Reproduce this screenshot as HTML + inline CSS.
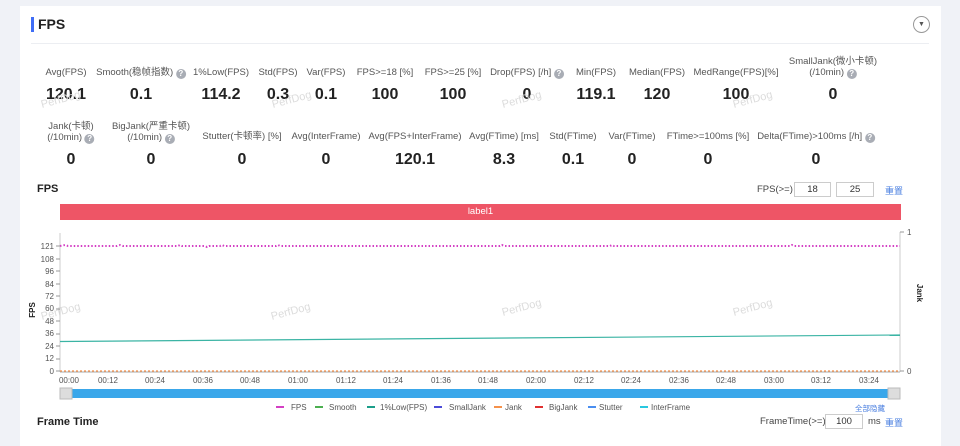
<!DOCTYPE html>
<html><head><meta charset="utf-8"><style>
*{margin:0;padding:0;box-sizing:border-box}
body{width:960px;height:433px;overflow:hidden;background:#f0f2f7;font-family:"Liberation Sans","Noto Sans CJK SC",sans-serif;color:#333;position:relative}
.card{position:absolute;left:20px;top:6px;width:921px;height:440px;background:#fff}
.a{position:absolute;white-space:nowrap}
.l{font-size:9.5px;color:#555;transform:translateX(-50%);text-align:center;line-height:11px}
.v{font-size:16px;font-weight:bold;color:#222;transform:translateX(-50%)}
.q{display:inline-block;width:10px;height:10px;border-radius:50%;background:#a9adb5;color:#fff;font-size:8px;line-height:10px;text-align:center;font-weight:bold;vertical-align:-1px}
.box{position:absolute;border:1px solid #ccc;font-size:9.5px;text-align:center;line-height:13px;color:#333}
.blue{color:#4a7fe0;font-size:9px}
</style></head><body>
<div class="card"></div>
<div class="a" style="left:31px;top:17px;width:3px;height:15px;background:#3f6df6"></div>
<div class="a" style="left:38px;top:16px;font-size:14px;font-weight:bold;color:#222">FPS</div>
<div class="a" style="left:31px;top:43px;width:898px;height:1px;background:#eceef2"></div>
<div class="a" style="left:913px;top:16px;width:17px;height:17px;border:1px solid #999;border-radius:50%;font-size:7px;text-align:center;line-height:15px;color:#555">▼</div>

<div class="a l" style="left:66px;top:67px">Avg(FPS)</div>
<div class="a l" style="left:141px;top:67px">Smooth(稳帧指数) <span class="q">?</span></div>
<div class="a l" style="left:221px;top:67px">1%Low(FPS)</div>
<div class="a l" style="left:278px;top:67px">Std(FPS)</div>
<div class="a l" style="left:326px;top:67px">Var(FPS)</div>
<div class="a l" style="left:385px;top:67px">FPS>=18 [%]</div>
<div class="a l" style="left:453px;top:67px">FPS>=25 [%]</div>
<div class="a l" style="left:527px;top:67px">Drop(FPS) [/h] <span class="q">?</span></div>
<div class="a l" style="left:596px;top:67px">Min(FPS)</div>
<div class="a l" style="left:657px;top:67px">Median(FPS)</div>
<div class="a l" style="left:736px;top:67px">MedRange(FPS)[%]</div>
<div class="a l" style="left:833px;top:56px">SmallJank(微小卡顿)<br>(/10min) <span class="q">?</span></div>

<div class="a v" style="left:66px;top:86px">120.1</div>
<div class="a v" style="left:141px;top:86px">0.1</div>
<div class="a v" style="left:221px;top:86px">114.2</div>
<div class="a v" style="left:278px;top:86px">0.3</div>
<div class="a v" style="left:326px;top:86px">0.1</div>
<div class="a v" style="left:385px;top:86px">100</div>
<div class="a v" style="left:453px;top:86px">100</div>
<div class="a v" style="left:527px;top:86px">0</div>
<div class="a v" style="left:596px;top:86px">119.1</div>
<div class="a v" style="left:657px;top:86px">120</div>
<div class="a v" style="left:736px;top:86px">100</div>
<div class="a v" style="left:833px;top:86px">0</div>

<div class="a l" style="left:71px;top:121px">Jank(卡顿)<br>(/10min) <span class="q">?</span></div>
<div class="a l" style="left:151px;top:121px">BigJank(严重卡顿)<br>(/10min) <span class="q">?</span></div>
<div class="a l" style="left:242px;top:131px">Stutter(卡顿率) [%]</div>
<div class="a l" style="left:326px;top:131px">Avg(InterFrame)</div>
<div class="a l" style="left:415px;top:131px">Avg(FPS+InterFrame)</div>
<div class="a l" style="left:504px;top:131px">Avg(FTime) [ms]</div>
<div class="a l" style="left:573px;top:131px">Std(FTime)</div>
<div class="a l" style="left:632px;top:131px">Var(FTime)</div>
<div class="a l" style="left:708px;top:131px">FTime>=100ms [%]</div>
<div class="a l" style="left:816px;top:131px">Delta(FTime)>100ms [/h] <span class="q">?</span></div>

<div class="a v" style="left:71px;top:151px">0</div>
<div class="a v" style="left:151px;top:151px">0</div>
<div class="a v" style="left:242px;top:151px">0</div>
<div class="a v" style="left:326px;top:151px">0</div>
<div class="a v" style="left:415px;top:151px">120.1</div>
<div class="a v" style="left:504px;top:151px">8.3</div>
<div class="a v" style="left:573px;top:151px">0.1</div>
<div class="a v" style="left:632px;top:151px">0</div>
<div class="a v" style="left:708px;top:151px">0</div>
<div class="a v" style="left:816px;top:151px">0</div>

<div class="a" style="left:37px;top:183px;font-size:11px;font-weight:bold;color:#222">FPS</div>
<div class="a" style="left:757px;top:184px;font-size:9.5px;color:#444">FPS(>=)</div>
<div class="box" style="left:794px;top:182px;width:37px;height:15px">18</div>
<div class="box" style="left:836px;top:182px;width:38px;height:15px">25</div>
<div class="a blue" style="left:885px;top:184px">重置</div>

<div class="a" style="left:60px;top:204px;width:841px;height:16px;background:#ee5566;color:#fff;font-size:9.5px;text-align:center;line-height:16px">label1</div>

<svg class="a" style="left:0;top:0" width="960" height="433" font-family="Liberation Sans, sans-serif">
<g fill="#dcdcdc" font-size="11">
<text x="42" y="320" transform="rotate(-15 42 320)">PerfDog</text>
<text x="272" y="320" transform="rotate(-15 272 320)">PerfDog</text>
<text x="503" y="316" transform="rotate(-15 503 316)">PerfDog</text>
<text x="734" y="316" transform="rotate(-15 734 316)">PerfDog</text>
<text x="42" y="108" transform="rotate(-15 42 108)">PerfDog</text>
<text x="273" y="108" transform="rotate(-15 273 108)">PerfDog</text>
<text x="503" y="108" transform="rotate(-15 503 108)">PerfDog</text>
<text x="734" y="108" transform="rotate(-15 734 108)">PerfDog</text>
</g>
<line x1="60" y1="233" x2="60" y2="372" stroke="#ccc"/>
<line x1="900" y1="232" x2="900" y2="372" stroke="#ccc"/>
<line x1="60" y1="372" x2="900" y2="372" stroke="#aaa"/>
<g font-size="8" fill="#555" text-anchor="end">
<text x="54" y="249">121</text><text x="54" y="262">108</text><text x="54" y="274">96</text><text x="54" y="287">84</text><text x="54" y="299">72</text><text x="54" y="311">60</text><text x="54" y="324">48</text><text x="54" y="336">36</text><text x="54" y="349">24</text><text x="54" y="361">12</text><text x="54" y="374">0</text>
</g>
<g stroke="#999"><line x1="56" y1="246" x2="60" y2="246"/><line x1="56" y1="259" x2="60" y2="259"/><line x1="56" y1="271" x2="60" y2="271"/><line x1="56" y1="284" x2="60" y2="284"/><line x1="56" y1="296" x2="60" y2="296"/><line x1="56" y1="309" x2="60" y2="309"/><line x1="56" y1="321" x2="60" y2="321"/><line x1="56" y1="334" x2="60" y2="334"/><line x1="56" y1="346" x2="60" y2="346"/><line x1="56" y1="359" x2="60" y2="359"/><line x1="56" y1="371" x2="60" y2="371"/>
<line x1="900" y1="232" x2="904" y2="232"/><line x1="900" y1="371" x2="904" y2="371"/></g>
<text x="907" y="235" font-size="8" fill="#555">1</text>
<text x="907" y="374" font-size="8" fill="#555">0</text>
<text transform="translate(35 310) rotate(-90)" font-size="8" fill="#222" font-weight="bold" text-anchor="middle">FPS</text>
<text transform="translate(917 293) rotate(90)" font-size="8" fill="#222" font-weight="bold" text-anchor="middle">Jank</text>
<line x1="60" y1="341.5" x2="900" y2="335" stroke="#3bb4a4" stroke-width="1.2"/>
<line x1="60" y1="371" x2="900" y2="371" stroke="#f5914a" stroke-width="1.2" stroke-dasharray="2 2"/>
<polyline points="60,246 65,245 68,246 117,246 120,245 123,246 178,246 180,245 182,246 205,246 207,247 209,246 220,246 222,245 224,246 276,246 278,245 280,246 500,246 502,245 504,246 610,246 612,245 614,246 790,246 792,245 794,246 900,246" fill="none" stroke="#d43fc4" stroke-width="2" stroke-dasharray="1.5 2"/>
<g font-size="8" fill="#555" text-anchor="middle">
<text x="69" y="383">00:00</text><text x="108" y="383">00:12</text><text x="155" y="383">00:24</text><text x="203" y="383">00:36</text><text x="250" y="383">00:48</text><text x="298" y="383">01:00</text><text x="346" y="383">01:12</text><text x="393" y="383">01:24</text><text x="441" y="383">01:36</text><text x="488" y="383">01:48</text><text x="536" y="383">02:00</text><text x="584" y="383">02:12</text><text x="631" y="383">02:24</text><text x="679" y="383">02:36</text><text x="726" y="383">02:48</text><text x="774" y="383">03:00</text><text x="821" y="383">03:12</text><text x="869" y="383">03:24</text>
</g>
<rect x="66" y="389" width="828" height="9" fill="#3aa7ea"/>
<rect x="60" y="388" width="12" height="11" fill="#ddd" stroke="#bbb"/>
<rect x="888" y="388" width="12" height="11" fill="#ddd" stroke="#bbb"/>
<g stroke-width="2">
<line x1="276" y1="407" x2="284" y2="407" stroke="#d43fc4"/><line x1="315" y1="407" x2="323" y2="407" stroke="#4caf50"/><line x1="367" y1="407" x2="375" y2="407" stroke="#1b9e8a"/><line x1="434" y1="407" x2="442" y2="407" stroke="#4b4bd8"/><line x1="494" y1="407" x2="502" y2="407" stroke="#f5914a"/><line x1="535" y1="407" x2="543" y2="407" stroke="#e03030"/><line x1="588" y1="407" x2="596" y2="407" stroke="#4a8ef0"/><line x1="640" y1="407" x2="648" y2="407" stroke="#29c8e0"/>
</g>
<g font-size="8" fill="#555">
<text x="291" y="410">FPS</text><text x="329" y="410">Smooth</text><text x="380" y="410">1%Low(FPS)</text><text x="449" y="410">SmallJank</text><text x="505" y="410">Jank</text><text x="549" y="410">BigJank</text><text x="599" y="410">Stutter</text><text x="651" y="410">InterFrame</text>
</g>
</svg>
<div class="a blue" style="left:855px;top:403px;font-size:7.5px">全部隐藏</div>
<div class="a" style="left:37px;top:416px;font-size:11px;font-weight:bold;color:#222">Frame Time</div>
<div class="a" style="left:760px;top:416px;font-size:9.5px;color:#444">FrameTime(>=)</div>
<div class="box" style="left:825px;top:414px;width:38px;height:15px">100</div>
<div class="a" style="left:868px;top:416px;font-size:9.5px;color:#444">ms</div>
<div class="a blue" style="left:885px;top:416px">重置</div>
</body></html>
